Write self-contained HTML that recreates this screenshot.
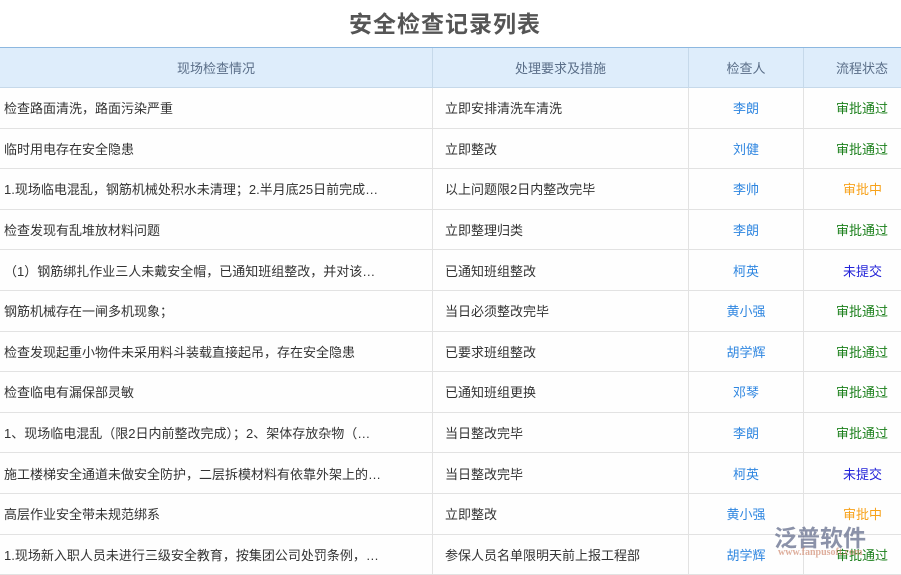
<!DOCTYPE html>
<html><head><meta charset="utf-8"><style>
*{margin:0;padding:0;box-sizing:border-box}
body{width:901px;height:568px;overflow:hidden;background:#fff;font-family:"Liberation Sans","Noto Sans CJK SC",sans-serif;font-size:13px;color:#333;position:relative}
.t{position:absolute;top:5px;left:0;width:890px;text-align:center;font-size:23px;font-weight:bold;color:#555;letter-spacing:1px}
.hd{position:absolute;top:47px;left:0;width:901px;height:41px;background:#deedfb;border-top:1px solid #8db8e0;border-bottom:1px solid #c6d9ea;color:#5a6e88}
.r{position:absolute;left:0;width:901px;height:40.6px;border-bottom:1px solid #e2e2e2;background:#fefefe}
.c{position:absolute;top:0;height:100%;display:flex;align-items:center;white-space:nowrap;overflow:hidden}
.c1{left:0;width:432px;padding-left:4px}
.c2{left:432px;width:256px;padding-left:12px;border-left:1px solid #e2e2e2}
.c3{left:688px;width:115px;justify-content:center;border-left:1px solid #e2e2e2;color:#2f86e0}
.c4{left:803px;width:120px;padding-left:32px;border-left:1px solid #e2e2e2}
.hd .c{color:#5a6e88;border-left-color:#c6d9ea}
.hd .c1,.hd .c2{justify-content:center;padding:0}
.g{color:#1a7f1a}.o{color:#f7a21b}.b{color:#2323d8}
.wm{position:absolute;left:774px;top:519px;font-size:23px;font-weight:bold;color:rgba(100,110,140,.75)}
.wm2{position:absolute;left:778px;top:547px;font-size:10px;color:rgba(200,120,90,.6);font-family:"Liberation Serif",serif;font-weight:bold}
</style></head><body>
<div class="t">安全检查记录列表</div>
<div class="hd"><div class="c c1">现场检查情况</div><div class="c c2">处理要求及措施</div><div class="c c3" style="color:#5a6e88">检查人</div><div class="c c4">流程状态</div></div>
<div class="r" style="top:88px"><div class="c c1">检查路面清洗，路面污染严重</div><div class="c c2">立即安排清洗车清洗</div><div class="c c3">李朗</div><div class="c c4 g">审批通过</div></div>
<div class="r" style="top:128.6px"><div class="c c1">临时用电存在安全隐患</div><div class="c c2">立即整改</div><div class="c c3">刘健</div><div class="c c4 g">审批通过</div></div>
<div class="r" style="top:169.2px"><div class="c c1">1.现场临电混乱，钢筋机械处积水未清理；2.半月底25日前完成…</div><div class="c c2">以上问题限2日内整改完毕</div><div class="c c3">李帅</div><div class="c c4 o" style="padding-left:39px">审批中</div></div>
<div class="r" style="top:209.8px"><div class="c c1">检查发现有乱堆放材料问题</div><div class="c c2">立即整理归类</div><div class="c c3">李朗</div><div class="c c4 g">审批通过</div></div>
<div class="r" style="top:250.4px"><div class="c c1">（1）钢筋绑扎作业三人未戴安全帽，已通知班组整改，并对该…</div><div class="c c2">已通知班组整改</div><div class="c c3">柯英</div><div class="c c4 b" style="padding-left:39px">未提交</div></div>
<div class="r" style="top:291px"><div class="c c1">钢筋机械存在一闸多机现象；</div><div class="c c2">当日必须整改完毕</div><div class="c c3">黄小强</div><div class="c c4 g">审批通过</div></div>
<div class="r" style="top:331.6px"><div class="c c1">检查发现起重小物件未采用料斗装载直接起吊，存在安全隐患</div><div class="c c2">已要求班组整改</div><div class="c c3">胡学辉</div><div class="c c4 g">审批通过</div></div>
<div class="r" style="top:372.2px"><div class="c c1">检查临电有漏保部灵敏</div><div class="c c2">已通知班组更换</div><div class="c c3">邓琴</div><div class="c c4 g">审批通过</div></div>
<div class="r" style="top:412.8px"><div class="c c1">1、现场临电混乱（限2日内前整改完成）；2、架体存放杂物（…</div><div class="c c2">当日整改完毕</div><div class="c c3">李朗</div><div class="c c4 g">审批通过</div></div>
<div class="r" style="top:453.4px"><div class="c c1">施工楼梯安全通道未做安全防护，二层拆模材料有依靠外架上的…</div><div class="c c2">当日整改完毕</div><div class="c c3">柯英</div><div class="c c4 b" style="padding-left:39px">未提交</div></div>
<div class="r" style="top:494px"><div class="c c1">高层作业安全带未规范绑系</div><div class="c c2">立即整改</div><div class="c c3">黄小强</div><div class="c c4 o" style="padding-left:39px">审批中</div></div>
<div class="r" style="top:534.6px"><div class="c c1">1.现场新入职人员未进行三级安全教育，按集团公司处罚条例，…</div><div class="c c2">参保人员名单限明天前上报工程部</div><div class="c c3">胡学辉</div><div class="c c4 g">审批通过</div></div>
<div class="wm">泛普软件</div>
<div class="wm2">www.fanpusoft.com</div>
</body></html>
